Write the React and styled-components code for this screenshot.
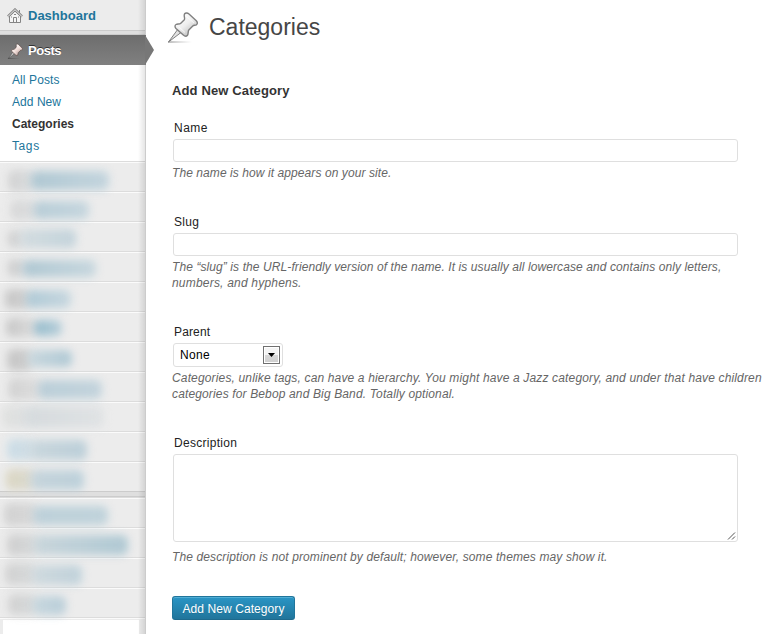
import React from "react";
import styled, { createGlobalStyle } from "styled-components";

const GlobalStyle = createGlobalStyle`
  * { box-sizing: border-box; }
  body { margin: 0; background: #fff; font: 12px/16px "Liberation Sans", Arial, sans-serif; color: #333; overflow: hidden; }
  h1, h2, p { margin: 0; }
`;

const Page = styled.div`
  display: flex;
  width: 777px;
  height: 634px;
`;

const Sidebar = styled.nav`
  position: relative;
  flex: none;
  width: 146px;
  height: 634px;
  background: #ececec;
  &::after {
    content: "";
    position: absolute;
    inset: 0 0 0 auto;
    width: 7px;
    border-right: 1px solid #ccc;
    background: linear-gradient(to right, rgba(0, 0, 0, 0), rgba(0, 0, 0, 0.1));
  }
`;

const TopItem = styled.a`
  display: flex;
  align-items: center;
  height: 30px;
  padding: 2px 0 0 7px;
  gap: 5px;
  font-size: 13px;
  font-weight: bold;
  letter-spacing: ${(p) => p.$spacing || 0}px;
  color: #21759b;
`;

const ActiveItem = styled(TopItem)`
  position: relative;
  z-index: 1;
  color: #fff;
  background: linear-gradient(#6d6d6d, #808080);
  text-shadow: 0 -1px 0 #333;
`;

const Arrow = styled.svg`
  position: absolute;
  left: 145px;
  top: 0;
`;

const Separator = styled.div`
  height: ${(p) => p.$height}px;
  background: #dfdfdf;
  border: solid #ccc;
  border-width: 1px 0;
`;

const Submenu = styled.div`
  display: flex;
  flex-direction: column;
  height: 96px;
  padding: 4px 0 0 12px;
  background: #fff;
`;

const SubItem = styled.a`
  height: 22px;
  line-height: 22px;
  color: ${(p) => (p.$current ? "#333" : "#21759b")};
  font-weight: ${(p) => (p.$current ? "bold" : "normal")};
  letter-spacing: ${(p) => p.$spacing || 0}px;
`;

const MenuRow = styled.div`
  display: flex;
  height: 30px;
  padding-left: ${(p) => p.$indent}px;
  border-top: 1px solid #dcdcdc;
  box-shadow: inset 0 1px 0 #fbfbfb;
`;

const Smudge = styled.span`
  flex: none;
  width: ${(p) => p.$width + 4}px;
  height: ${(p) => p.$height || 18}px;
  margin-top: ${(p) => p.$top || 8}px;
  margin-right: -4px;
  border-radius: 6px;
  background: linear-gradient(to right, ${(p) => p.$from}, ${(p) => p.$to});
  filter: blur(4px);
  opacity: 0.9;
`;

const BlankPatch = styled.div`
  width: 136px;
  height: 14px;
  margin-left: 3px;
  background: #fff;
`;

const LastRow = styled.div`
  height: 18px;
  padding-top: 2px;
  border-top: 1px solid #dcdcdc;
  box-shadow: inset 0 1px 0 #fbfbfb;
`;

const Main = styled.main`
  flex: 1;
  min-width: 0;
  padding-left: 26px;
`;

const Header = styled.header`
  display: flex;
  height: 54px;
  margin-left: -6px;
  padding-top: 11px;
`;

const Title = styled.h1`
  margin-left: 11px;
  font-size: 23px;
  line-height: 32px;
  font-weight: normal;
  color: #464646;
`;

const Heading = styled.h2`
  height: 16px;
  margin: 29px 0 21px;
  font-size: 13px;
  line-height: 16px;
  letter-spacing: 0.13px;
`;

const Field = styled.div`
  display: flex;
  flex-direction: column;
  align-items: flex-start;
  height: ${(p) => p.$height}px;
`;

const Label = styled.label`
  height: 19px;
  padding-left: 2px;
  color: #222;
  letter-spacing: ${(p) => p.$spacing || 0}px;
`;

const Input = styled.input`
  width: 565px;
  height: 23px;
  margin: 0 0 3px 1px;
  border: 1px solid #dfdfdf;
  border-radius: 3px;
  background: #fff;
  outline: 0;
`;

const TextArea = styled.div`
  display: flex;
  align-items: flex-end;
  justify-content: flex-end;
  width: 565px;
  height: 88px;
  margin: 0 0 7px 1px;
  border: 1px solid #dfdfdf;
  border-radius: 3px;
`;

const Select = styled.div`
  display: flex;
  align-items: center;
  justify-content: space-between;
  width: 110px;
  height: 24px;
  margin: 0 0 3px 1px;
  padding: 0 2px 0 6px;
  border: 1px solid #dfdfdf;
  border-radius: 3px;
  color: #000;
  letter-spacing: 0.3px;
`;

const DropButton = styled.span`
  display: flex;
  align-items: center;
  justify-content: center;
  width: 17px;
  height: 18px;
  border: 1px solid #707070;
  background: linear-gradient(#f4f4f4 50%, #d8d8d8 50%, #cfcfcf);
  box-shadow: inset 0 0 0 1px #fff;
`;

const Hint = styled.p`
  font-style: italic;
  color: #666;
  white-space: nowrap;
`;

const HintLine = styled.span`
  display: block;
  letter-spacing: ${(p) => p.$spacing || 0}px;
`;

const Submit = styled.button`
  display: block;
  width: 123px;
  height: 24px;
  padding: 2px 0 0;
  border: 1px solid #21759b;
  border-bottom-color: #1e6a8d;
  border-radius: 3px;
  background: linear-gradient(#2a95c5, #21759b);
  box-shadow: inset 0 1px 0 rgba(120, 200, 230, 0.5);
  color: #fff;
  font: 12px/20px "Liberation Sans", Arial, sans-serif;
  letter-spacing: 0.08px;
  text-shadow: 0 1px 0 rgba(0, 0, 0, 0.1);
`;

const GREY = "#cfcfcf";
const PALE = "#d9dcde";

const upperRows = [
  [8, { w: 23, h: 22, a: GREY, b: PALE }, { w: 74, h: 19, t: 9, a: "#a9c4d0", b: "#bfd2dc" }],
  [10, { w: 24, h: 20, a: "#d6d6d6", b: PALE }, { w: 51, h: 18, t: 9, a: "#b2cad5", b: "#c2d4dd" }],
  [8, { w: 13, h: 18, a: "#c9c9c9", b: PALE }, { w: 51, h: 19, t: 7, a: "#d0dade", b: "#bfd1da" }],
  [8, { w: 15, h: 18, t: 7, a: "#c6c6c6", b: PALE }, { w: 69, h: 17, t: 8, a: "#a9c4d0", b: "#c3d5dd" }],
  [5, { w: 21, h: 20, t: 7, a: "#c2c2c2", b: GREY }, { w: 41, h: 18, a: "#a9c6d4", b: "#c3d5de" }],
  [6, { w: 28, h: 19, t: 6, a: "#c2c2c2", b: "#dddddd" }, { w: 24, h: 16, t: 8, a: "#8bb6c9", b: "#b3ccd8" }],
  [7, { w: 21, h: 22, t: 7, a: "#c2c2c2", b: "#cccccc" }, { w: 40, h: 17, t: 8, a: "#c6d6dd", b: "#a9c5d2" }],
  [8, { w: 30, h: 22, t: 6, a: "#cfcfcf", b: "#dddddd" }, { w: 60, h: 19, t: 8, a: "#b5cbd6", b: "#bfd1db" }],
  [2, { w: 24, h: 22, t: 4, a: "#e0e1df", b: "#dadddf" }, { w: 74, h: 22, t: 4, a: "#d3d9dc", b: "#dfe2e4" }],
  [7, { w: 24, h: 21, t: 7, a: "#c8dce7", b: "#cddbe2" }, { w: 52, h: 20, a: "#c6d5dc", b: "#b7ccd7" }],
  [6, { w: 25, h: 21, t: 7, a: "#d9d4bd", b: "#d9d8cf" }, { w: 49, h: 20, a: "#c2d2da", b: "#b8ced9" }],
];

const lowerRows = [
  [4, { w: 29, h: 23, t: 5, a: GREY, b: "#d7d7d7" }, { w: 71, h: 19, t: 8, a: "#b9ced8", b: "#bbd0d9" }],
  [7, { w: 27, h: 22, t: 6, a: "#cccccc", b: "#d5d8d9" }, { w: 90, h: 20, t: 7, a: "#c6d4da", b: "#a9c5d1" }],
  [5, { w: 27, h: 22, t: 5, a: GREY, b: "#d5d8d9" }, { w: 46, h: 20, t: 7, a: "#cdd8dd", b: "#bbcfd9" }],
  [8, { w: 25, h: 21, t: 6, a: GREY, b: "#d5d8d9" }, { w: 29, h: 19, t: 8, a: "#c4d5dd", b: "#b4cbd7" }],
];

function MenuRows({ rows }) {
  return rows.map(([indent, ...parts], i) => (
    <MenuRow key={i} $indent={indent}>
      {parts.map((s, j) => (
        <Smudge key={j} $width={s.w} $height={s.h} $top={s.t} $from={s.a} $to={s.b} />
      ))}
    </MenuRow>
  ));
}

function HomeIcon() {
  return (
    <svg width="16" height="16" viewBox="0 0 16 16" fill="none" stroke="#858585">
      <path d="M2.500 8v6.500h11V8L8 3z" fill="#f5f5f5" />
      <path d="M1 8.500 8 1.700l7 6.800" strokeWidth="2.600" />
      <path d="m1 8.500 7-6.800 7 6.800" stroke="#eee" strokeWidth="1" />
      <path d="M12.500 5V2" />
      <path d="M6.500 14V9.500h3V14M4.500 8.500v1M11.500 8.500v1M7 6.500h2" />
    </svg>
  );
}

function PinIcon({ size, dark }) {
  const id = dark ? "pinDark" : "pinLight";
  return (
    <svg width={size} height={size} viewBox="0 0 32 32">
      <defs>
        <linearGradient id={id} x1="0.2" y1="0.1" x2="0.8" y2="0.9">
          <stop offset="0" stopColor="#fff" />
          <stop offset="0.5" stopColor={dark ? "#f0dcd7" : "#eee"} />
          <stop offset="1" stopColor={dark ? "#b49b97" : "#bdbdbd"} />
        </linearGradient>
        <linearGradient id={`${id}Shadow`}>
          <stop offset="0" stopColor={dark ? "#333" : "#777"} />
          <stop offset="1" stopColor={dark ? "#333" : "#999"} stopOpacity="0" />
        </linearGradient>
      </defs>
      <path d="M2 30.500h24v1H2z" fill={`url(#${id}Shadow)`} />
      <path d="M12 18 2.500 31 15 21.500z" fill={dark ? "#ccc" : "#e2e2e2"} stroke={dark ? "#444" : "#808080"} />
      <path
        d="M18.500 3C19.500 1.500 21.500 1.700 23 3L30.300 9.800C31.700 11.300 31.700 13 30.300 13.800 29 14.500 27.800 14 26.800 15L22.800 19C21.800 20.200 22.700 23 21.300 24.600 20 25.800 18.300 25 17 23.800L10 17.500C8.700 16 8.700 14.200 10 13.500 11.500 12.700 13.500 13.500 14.800 12.200L18.300 8.800C19.300 7.500 17.500 4.700 18.500 3z"
        fill={`url(#${id})`}
        stroke={dark ? "#5a4a48" : "#808080"}
        strokeWidth="1.400"
      />
      <path d="m20.500 5.500 7.500 6.500M12.500 15.500l6.500 6" stroke="#fff" fill="none" opacity="0.7" />
    </svg>
  );
}

export default function App() {
  return (
    <>
      <GlobalStyle />
      <Page>
        <Sidebar>
          <TopItem><HomeIcon />Dashboard</TopItem>
          <Separator $height={5} />
          <ActiveItem $spacing={-0.45}>
            <PinIcon size={16} dark />Posts
            <Arrow width="9" height="30" viewBox="0 0 9 30">
              <path d="M0 0 9 15 0 30z" fill="#777" />
            </Arrow>
          </ActiveItem>
          <Submenu>
            <SubItem $spacing={0.1}>All Posts</SubItem>
            <SubItem $spacing={0.05}>Add New</SubItem>
            <SubItem $current>Categories</SubItem>
            <SubItem $spacing={0.6}>Tags</SubItem>
          </Submenu>
          <MenuRows rows={upperRows} />
          <Separator $height={6} />
          <MenuRows rows={lowerRows} />
          <LastRow><BlankPatch /></LastRow>
        </Sidebar>
        <Main>
          <Header>
            <PinIcon size={32} />
            <Title>Categories</Title>
          </Header>
          <Heading>Add New Category</Heading>
          <Field $height={94}>
            <Label $spacing={0.5}>Name</Label>
            <Input />
            <Hint><HintLine $spacing={0.08}>The name is how it appears on your site.</HintLine></Hint>
          </Field>
          <Field $height={110}>
            <Label $spacing={0.3}>Slug</Label>
            <Input />
            <Hint>
              <HintLine $spacing={0.092}>The “slug” is the URL-friendly version of the name. It is usually all lowercase and contains only letters,</HintLine>
              <HintLine $spacing={0.2}>numbers, and hyphens.</HintLine>
            </Hint>
          </Field>
          <Field $height={111}>
            <Label $spacing={0.15}>Parent</Label>
            <Select>
              None
              <DropButton>
                <svg width="7" height="4" viewBox="0 0 7 4"><path d="M0 0h7L3.500 4z" /></svg>
              </DropButton>
            </Select>
            <Hint>
              <HintLine $spacing={0.15}>Categories, unlike tags, can have a hierarchy. You might have a Jazz category, and under that have children</HintLine>
              <HintLine $spacing={0.14}>categories for Bebop and Big Band. Totally optional.</HintLine>
            </Hint>
          </Field>
          <Field $height={161}>
            <Label $spacing={0.28}>Description</Label>
            <TextArea>
              <svg width="10" height="10" viewBox="0 0 10 10" stroke="#555" strokeWidth="1">
                <path d="M1 8.500 8 1.500M5 8.500 8 5.500" />
              </svg>
            </TextArea>
            <Hint><HintLine $spacing={0.12}>The description is not prominent by default; however, some themes may show it.</HintLine></Hint>
          </Field>
          <Submit>Add New Category</Submit>
        </Main>
      </Page>
    </>
  );
}
